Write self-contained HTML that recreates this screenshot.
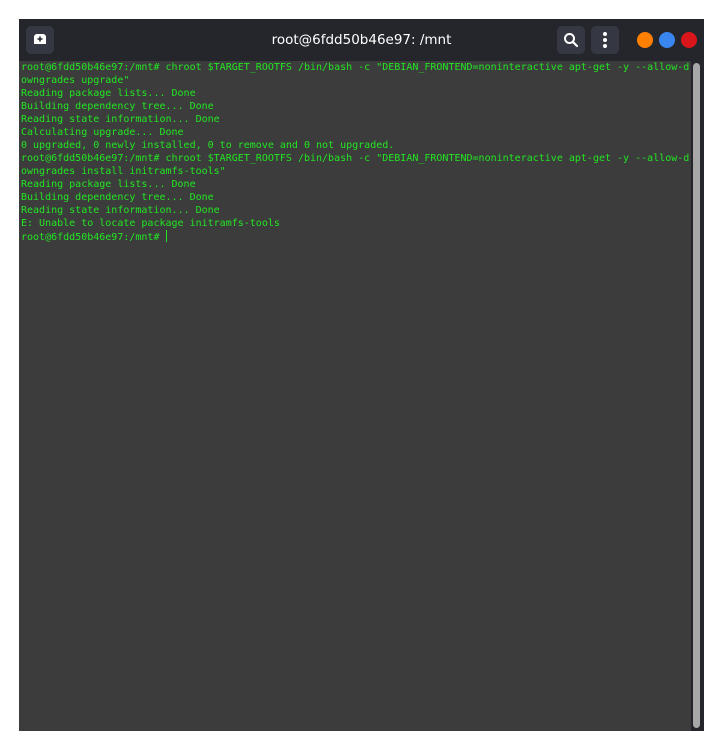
<!DOCTYPE html>
<html><head><style>
html,body{margin:0;padding:0;background:#fff;width:723px;height:751px;overflow:hidden}
.win{position:absolute;left:19px;top:19px;width:685px;height:712px;background:#24262c;}
.title{position:absolute;left:0;top:0;width:685px;height:42px;background:#24262c;color:#fff;font:13.5px "DejaVu Sans","Liberation Sans",sans-serif;text-align:center;line-height:42px}
.btn{position:absolute;top:7px;width:28px;height:28px;background:#353842;border-radius:5px}
.dot{position:absolute;top:13px;width:16px;height:16px;border-radius:50%}
.term{position:absolute;left:0;top:42px;width:672px;height:670px;background:#3c3c3c}
.track{position:absolute;left:672px;top:42px;width:13px;height:670px;background:#24262c}
.thumb{position:absolute;left:674px;top:44px;width:7px;height:665px;background:#a8a8a8;border-radius:4px}
pre{position:absolute;left:2px;top:0;margin:0;font:10px "DejaVu Sans Mono","Liberation Mono",monospace;line-height:13px;color:#22e622}
.cur{display:inline-block;width:1px;height:12px;background:#22e622;vertical-align:-2px}
</style></head><body>
<div class="win">
 <div class="title">root@6fdd50b46e97: /mnt</div>
 <div class="btn" style="left:7px"><svg width="28" height="28"><path d="M8 18V11a3 3 0 0 1 3-3h6a3 3 0 0 1 3 3v7z" fill="#fff"/><path d="M14 10.5v5M11.5 13h5" stroke="#24262c" stroke-width="1.6"/></svg></div>
 <div class="btn" style="left:538px"><svg width="28" height="28"><circle cx="12.5" cy="12.5" r="4.5" fill="none" stroke="#fff" stroke-width="2"/><path d="M16 16l4 4" stroke="#fff" stroke-width="2.2" stroke-linecap="round"/></svg></div>
 <div class="btn" style="left:572px"><svg width="28" height="28"><circle cx="14" cy="8" r="2" fill="#fff"/><circle cx="14" cy="14" r="2" fill="#fff"/><circle cx="14" cy="20" r="2" fill="#fff"/></svg></div>
 <div class="dot" style="left:618px;background:#ff7f00"></div>
 <div class="dot" style="left:640px;background:#3a86f0"></div>
 <div class="dot" style="left:662px;background:#d8161b"></div>
 <div class="term"><pre>root@6fdd50b46e97:/mnt# chroot $TARGET_ROOTFS /bin/bash -c "DEBIAN_FRONTEND=noninteractive apt-get -y --allow-d
owngrades upgrade"
Reading package lists... Done
Building dependency tree... Done
Reading state information... Done
Calculating upgrade... Done
0 upgraded, 0 newly installed, 0 to remove and 0 not upgraded.
root@6fdd50b46e97:/mnt# chroot $TARGET_ROOTFS /bin/bash -c "DEBIAN_FRONTEND=noninteractive apt-get -y --allow-d
owngrades install initramfs-tools"
Reading package lists... Done
Building dependency tree... Done
Reading state information... Done
E: Unable to locate package initramfs-tools
root@6fdd50b46e97:/mnt# <span class="cur"></span></pre></div>
 <div class="track"></div>
 <div class="thumb"></div>
</div>
</body></html>
